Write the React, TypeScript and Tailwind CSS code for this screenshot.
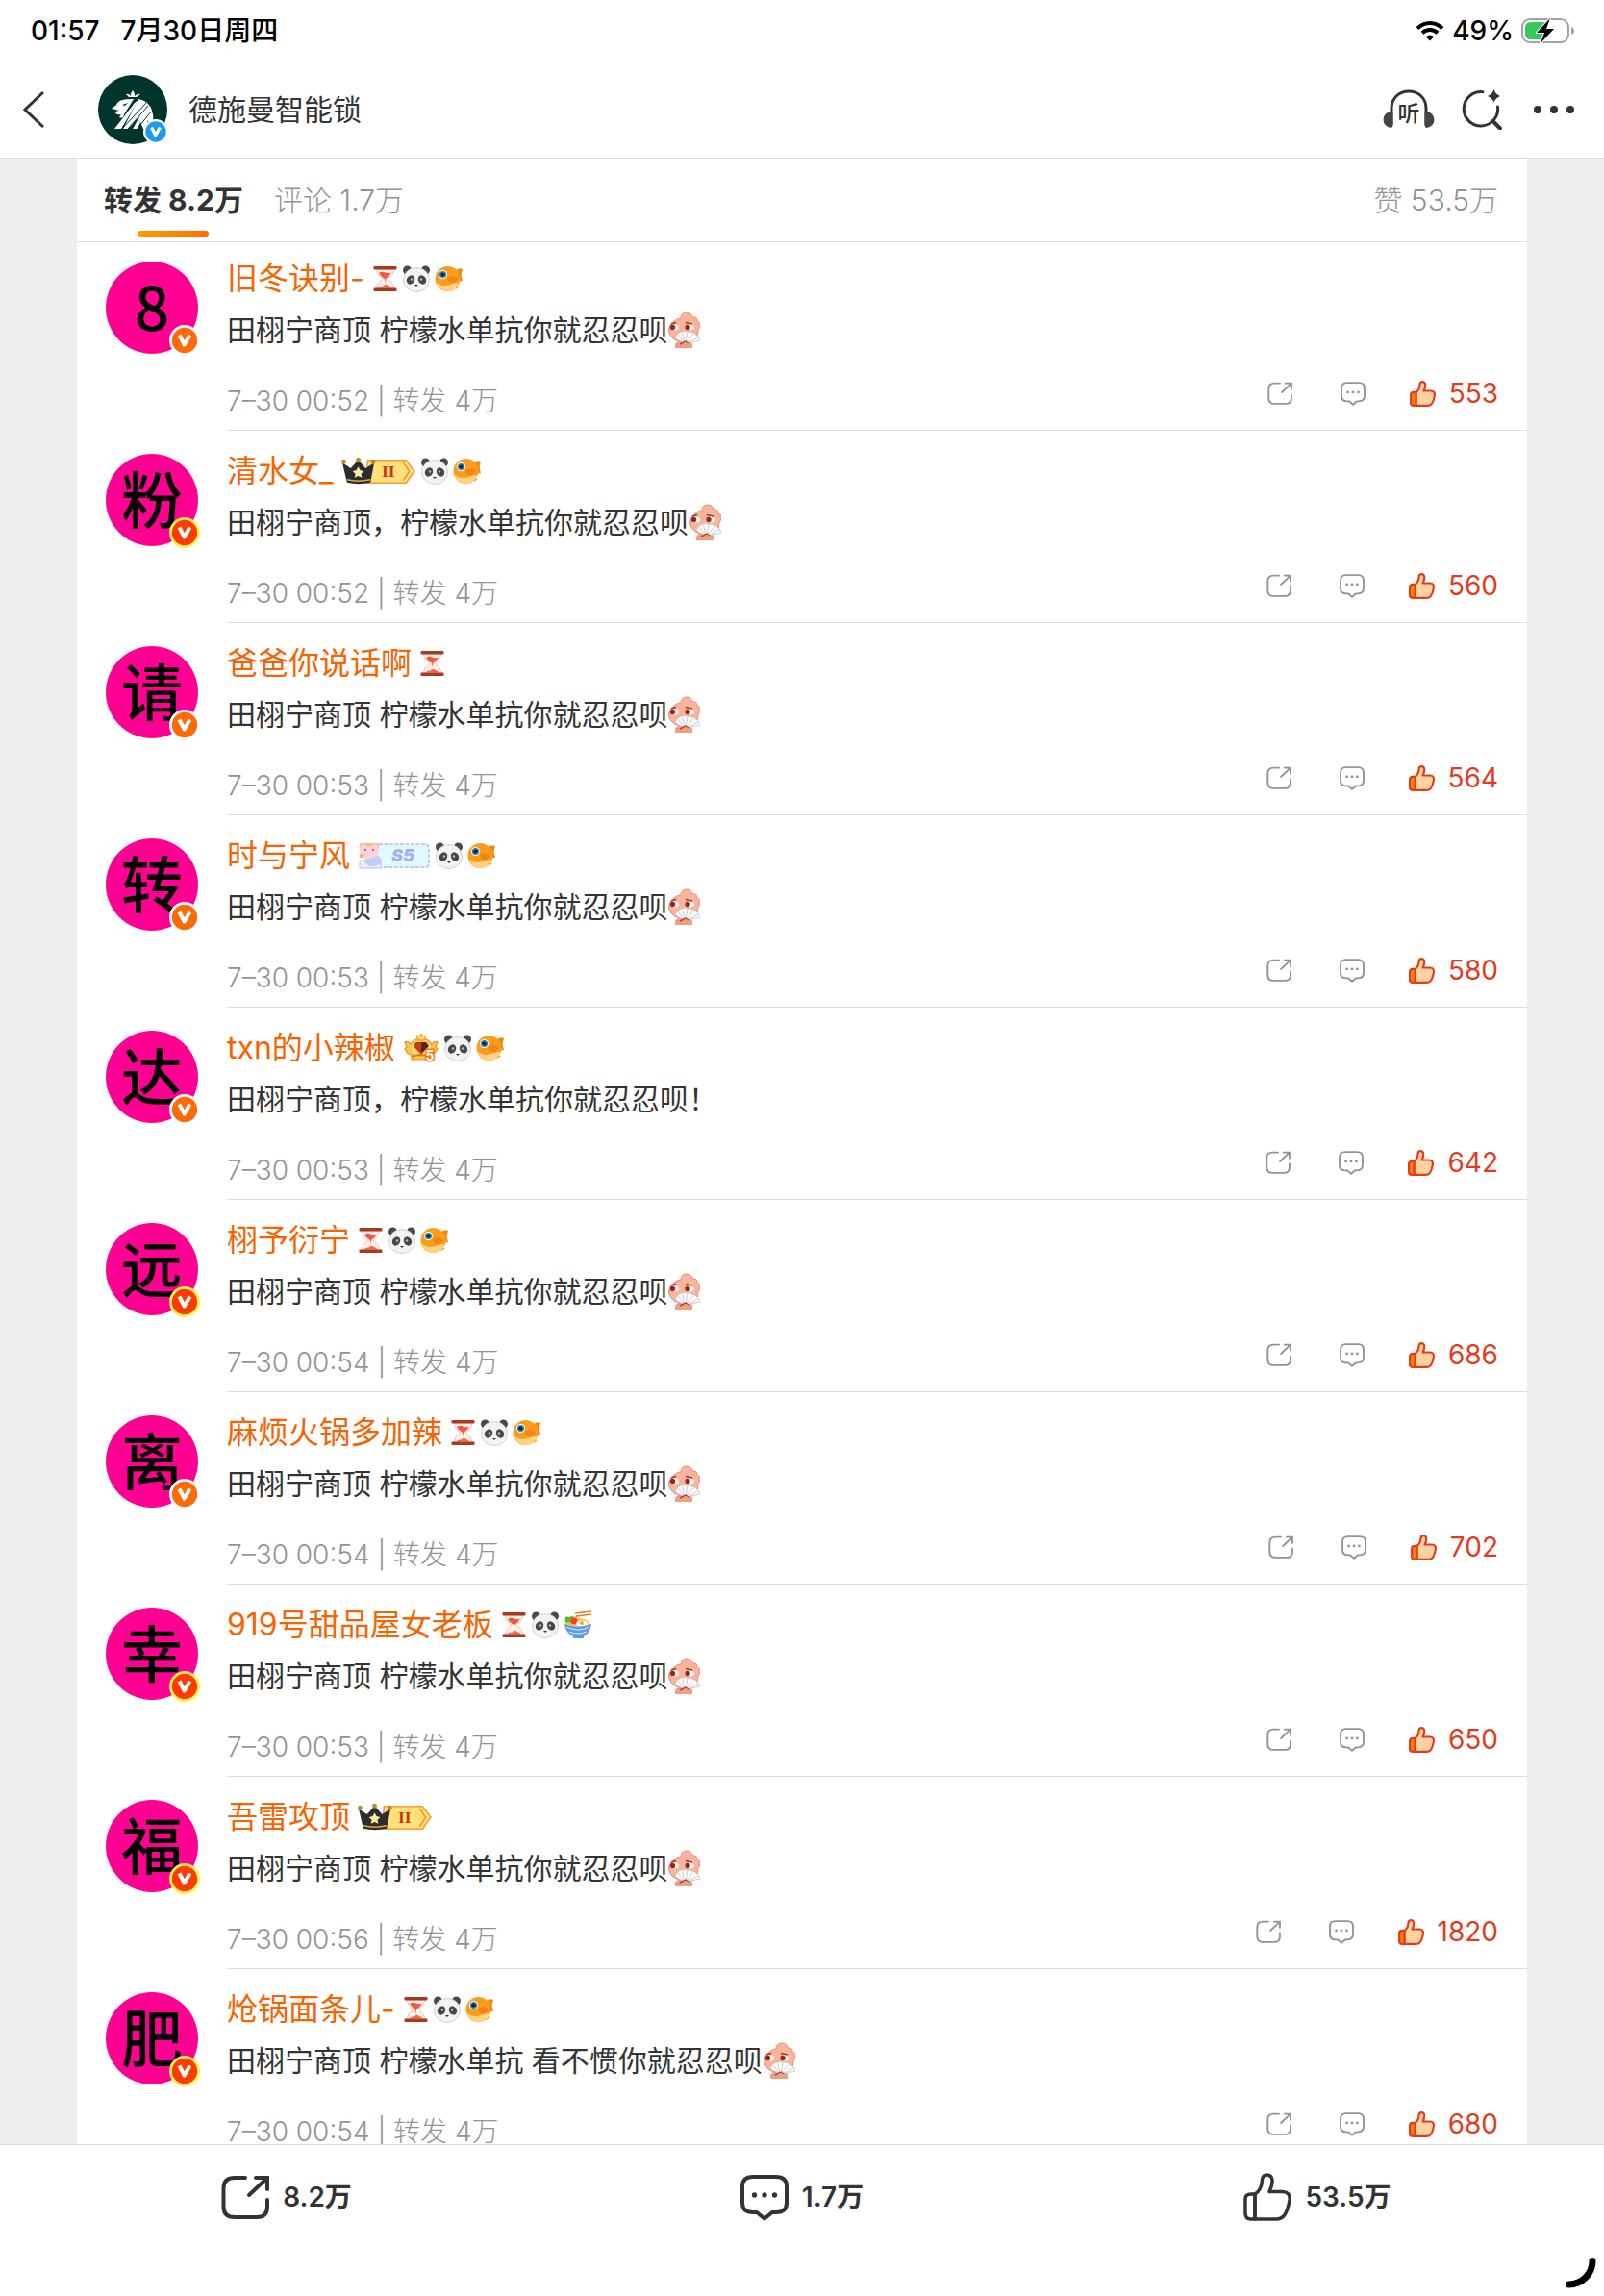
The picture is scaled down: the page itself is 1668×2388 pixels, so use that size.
import { ReactNode } from "react";

type TBadge = "hourglass" | "panda" | "fish" | "noodles" | "vip" | "s5" | "crown";

type TRepost = {
  avatar: string;
  gold?: boolean;
  name: string;
  badges: TBadge[];
  text: string;
  fan?: boolean;
  time: string;
  likes: number;
};

const TEXT = "田栩宁商顶 柠檬水单抗你就忍忍呗";

const reposts: TRepost[] = [
  { avatar: "8", name: "旧冬诀别-", badges: ["hourglass", "panda", "fish"], text: TEXT, fan: true, time: "7–30 00:52", likes: 553 },
  { avatar: "粉", gold: true, name: "清水女_", badges: ["vip", "panda", "fish"], text: "田栩宁商顶，柠檬水单抗你就忍忍呗", fan: true, time: "7–30 00:52", likes: 560 },
  { avatar: "请", name: "爸爸你说话啊", badges: ["hourglass"], text: TEXT, fan: true, time: "7–30 00:53", likes: 564 },
  { avatar: "转", name: "时与宁风", badges: ["s5", "panda", "fish"], text: TEXT, fan: true, time: "7–30 00:53", likes: 580 },
  { avatar: "达", name: "txn的小辣椒", badges: ["crown", "panda", "fish"], text: "田栩宁商顶，柠檬水单抗你就忍忍呗！", time: "7–30 00:53", likes: 642 },
  { avatar: "远", gold: true, name: "栩予衍宁", badges: ["hourglass", "panda", "fish"], text: TEXT, fan: true, time: "7–30 00:54", likes: 686 },
  { avatar: "离", name: "麻烦火锅多加辣", badges: ["hourglass", "panda", "fish"], text: TEXT, fan: true, time: "7–30 00:54", likes: 702 },
  { avatar: "幸", gold: true, name: "919号甜品屋女老板", badges: ["hourglass", "panda", "noodles"], text: TEXT, fan: true, time: "7–30 00:53", likes: 650 },
  { avatar: "福", gold: true, name: "吾雷攻顶", badges: ["vip"], text: TEXT, fan: true, time: "7–30 00:56", likes: 1820 },
  { avatar: "肥", gold: true, name: "炝锅面条儿-", badges: ["hourglass", "panda", "fish"], text: "田栩宁商顶 柠檬水单抗 看不惯你就忍忍呗", fan: true, time: "7–30 00:54", likes: 680 },
];

export default function App() {
  return (
    <div className="relative flex h-screen w-full flex-col overflow-hidden bg-white font-['Inter','Noto_Sans_CJK_SC',sans-serif] text-[#333]">
      <StatusBar />
      <Header />
      <main className="min-h-0 flex-1 overflow-hidden bg-[#ededed] px-20">
        <div className="bg-white">
          <Tabs />
          <ul>
            {reposts.map((item) => (
              <RepostRow key={item.name} item={item} />
            ))}
          </ul>
        </div>
      </main>
      <BottomBar />
      <svg className="absolute right-2 bottom-2 h-8 w-8" viewBox="0 0 32 32" fill="none">
        <path d="M28 3.500C28 17 17 28 3.500 28" stroke="#000" strokeWidth="7" strokeLinecap="round" />
      </svg>
    </div>
  );
}

function StatusBar() {
  return (
    <div className="flex h-16 items-center justify-between pr-[30px] pl-8 text-[28px] font-medium text-black">
      <div className="flex gap-[22px]">
        <span>01:57</span>
        <span>7月30日周四</span>
      </div>
      <div className="flex items-center gap-2">
        <svg className="h-[22px] w-[30px]" viewBox="0 0 30 22" fill="none" stroke="#000" strokeWidth="4">
          <path d="M2 8.500C9.500 1 20.500 1 28 8.500" />
          <path d="M7 13.300C11.700 9 18.300 9 23 13.300" />
          <path d="M10.800 17.300Q15 13.600 19.200 17.300L15 21.500Z" fill="#000" stroke="none" />
        </svg>
        <span>49%</span>
        <svg className="h-7 w-14" viewBox="0 0 56 28">
          <rect x="1" y="2" width="48" height="24" rx="8" fill="none" stroke="#a3a3a3" strokeWidth="2" />
          <path d="M10 5H24V23H10Q4 23 4 17V11Q4 5 10 5Z" fill="#34c759" />
          <path d="M52 10Q55 11 55 14T52 18Z" fill="#a3a3a3" />
          <path d="M30 1L16 16H24L20 27L34 12H26Z" fill="#000" stroke="#fff" strokeWidth="2" paintOrder="stroke" strokeLinejoin="round" />
        </svg>
      </div>
    </div>
  );
}

function Header() {
  return (
    <header className="flex h-[101px] items-center border-b border-[#dedede] pr-[30px] pl-6">
      <button aria-label="返回" className="mr-14 h-10 w-[22px]">
        <svg viewBox="0 0 22 40" fill="none" stroke="#333" strokeWidth="3">
          <path d="M21 2L2 20L21 38" />
        </svg>
      </button>
      <a href="#profile" className="flex items-center gap-[22px] text-[30px]">
        <span className="relative h-[72px] w-[72px] rounded-full bg-[#00352f]">
          <LionLogo />
          <span className="absolute -right-px bottom-0">
            <VerifiedBadge fill="#1a9af0" ring="#fff" size="h-[26px] w-[26px]" />
          </span>
        </span>
        德施曼智能锁
      </a>
      <div className="ml-auto flex items-center gap-7">
        <button aria-label="听" className="h-[42px] w-[54px]">
          <svg viewBox="0 0 54 42" fill="none" stroke="#333" strokeWidth="3">
            <path d="M9 37V20C9 -4 45 -4 45 20V37" />
            <path d="M9 23A8.500 8.500 0 0 0 9 40Q10.500 39 10.500 37V23ZM45 23A8.500 8.500 0 0 1 45 40Q43.500 39 43.500 37V23Z" fill="#444" stroke="none" />
            <text x="27" y="33" textAnchor="middle" fontSize="23" fontWeight="500" fill="#333" stroke="none">听</text>
          </svg>
        </button>
        <button aria-label="搜索" className="h-[42px] w-[42px]">
          <svg viewBox="0 0 42 42" fill="none" stroke="#333" strokeWidth="3" strokeLinecap="round">
            <path d="M22 2.700A17.700 17.700 0 1 0 37.500 18" />
            <path d="M32.500 33L40 40.500" strokeWidth="4" />
            <path d="M33.500 0Q35 5 40 7Q35 9 33.500 13.500Q32 9 27 7Q32 5 33.500 0Z" fill="#333" stroke="none" />
          </svg>
        </button>
        <button aria-label="更多" className="ml-1 h-3 w-11">
          <svg viewBox="0 0 44 12" fill="#333">
            <circle cx="5" cy="6" r="4" />
            <circle cx="22" cy="6" r="4" />
            <circle cx="39" cy="6" r="4" />
          </svg>
        </button>
      </div>
    </header>
  );
}

function Tabs() {
  return (
    <div className="flex h-[87px] items-stretch border-b border-[#dedede] pr-[30px] pl-7 text-[30px] font-light text-[#939393]">
      <button className="relative mr-8 font-bold text-[#333]">
        转发 8.2万
        <span className="absolute bottom-[5px] left-1/2 h-[6px] w-[74px] -translate-x-1/2 rounded-full bg-linear-to-r from-[#ff9d00] to-[#ff6a00]" />
      </button>
      <button>评论 1.7万</button>
      <button className="ml-auto">赞 53.5万</button>
    </div>
  );
}

function RepostRow({ item }: { item: TRepost }) {
  return (
    <li className="flex pt-6 pl-[30px] first:pt-5">
      <div className="relative mr-[30px] flex h-24 w-24 shrink-0 items-center justify-center rounded-full bg-[#ff0093] pb-2 font-['Noto_Sans_CJK_SC',sans-serif] text-[64px] leading-none font-medium text-black">
        {item.avatar}
        <span className="absolute -right-0.5 -bottom-0.5">
          {item.gold ? (
            <VerifiedBadge fill="#fc3c00" ring="#fff34d" size="h-8 w-8" />
          ) : (
            <VerifiedBadge fill="#ff6a08" ring="#fff" size="h-8 w-8" />
          )}
        </span>
      </div>
      <div className="h-44 flex-1 border-b border-[#dedede] pr-[30px]">
        <div className="flex h-9 items-center gap-1 text-[32px] text-[#f76300]">
          <a href="#user" className="mr-1 whitespace-nowrap">{item.name}</a>
          {item.badges.map((badge) => (
            <Badge key={badge} type={badge} />
          ))}
        </div>
        <p className="mt-[11px] flex h-12 items-center text-[30px]">
          {item.text}
          {item.fan && <FanFace />}
        </p>
        <div className="mt-[26px] flex h-12 items-center justify-between text-[28px]">
          <p className="font-light text-[#939393]">
            {item.time} | 转发 4万
          </p>
          <div className="flex items-center pb-4 text-[#e33b1e]">
            <button aria-label="转发" className="mr-[50px] text-[#939393]">
              <ShareIcon className="h-[26px] w-[26px]" />
            </button>
            <button aria-label="评论" className="mr-[46px] text-[#939393]">
              <CommentIcon className="h-[26px] w-[26px]" />
            </button>
            <button className="flex items-center gap-[14px]">
              <ThumbIcon className="h-[27px] w-[27px]" liked />
              {item.likes}
            </button>
          </div>
        </div>
      </div>
    </li>
  );
}

function BottomBar() {
  return (
    <footer className="flex h-[158px] shrink-0 border-t border-[#dedede] px-[30px] text-[28px] font-semibold">
      <BarButton icon={<ShareIcon className="h-[50px] w-[50px]" bold />} label="8.2万" />
      <BarButton icon={<CommentIcon className="h-[50px] w-[50px]" bold />} label="1.7万" />
      <BarButton icon={<ThumbIcon className="h-[50px] w-[50px]" />} label="53.5万" />
    </footer>
  );
}

function BarButton({ icon, label }: { icon: ReactNode; label: string }) {
  return (
    <button className="flex h-[108px] flex-1 items-center justify-center gap-[14px]">
      {icon}
      {label}
    </button>
  );
}

function ShareIcon({ className, bold }: { className: string; bold?: boolean }) {
  return (
    <svg className={className} viewBox="0 0 50 50" fill="none" stroke="currentColor" strokeWidth={bold ? 4 : 3.600} strokeLinecap="round">
      <path d="M25 5H14Q2.500 5 2.500 16V35Q2.500 46 14 46H37Q48 46 48 35V28" />
      <path d="M36 5H48V17M47 6L29 23" />
    </svg>
  );
}

function CommentIcon({ className, bold }: { className: string; bold?: boolean }) {
  return (
    <svg className={className} viewBox="0 0 50 50" fill="none" stroke="currentColor" strokeWidth={bold ? 4 : 3.600} strokeLinejoin="round">
      <path d="M13 4H37Q48 4 48 14V31Q48 41 37 41H33L25 47.500L17 41H13Q2 41 2 31V14Q2 4 13 4Z" />
      <g fill="currentColor" stroke="none">
        <circle cx="14.500" cy="23" r="2.700" />
        <circle cx="25" cy="23" r="2.700" />
        <circle cx="35.500" cy="23" r="2.700" />
      </g>
    </svg>
  );
}

function ThumbIcon({ className, liked }: { className: string; liked?: boolean }) {
  return (
    <svg className={className} viewBox="0 0 50 50" fill="none" stroke="currentColor" strokeWidth={liked ? 4 : 3.500} strokeLinejoin="round">
      <path d="M12 22Q19 18 19.500 7Q20 2 24.500 2T30 7Q30.500 13 27 19.500H41Q49 20 48 28Q46.500 38 43 43.500Q40 48 34 48H12Z" fill={liked ? "#ffd2a1" : "none"} />
      <path d="M12 22H8Q2 22 2 27V42Q2 48 8 48H12Z" fill={liked ? "#ff8200" : "none"} />
    </svg>
  );
}

function VerifiedBadge({ fill, ring, size }: { fill: string; ring: string; size: string }) {
  return (
    <svg className={size} viewBox="0 0 32 32">
      <circle cx="16" cy="16" r="16" fill={ring} />
      <circle cx="16" cy="16" r="13.200" fill={fill} />
      <path d="M10.500 10.500L15.700 20.500L21.500 10.500" fill="none" stroke="#fff" strokeWidth="4" strokeLinejoin="round" />
    </svg>
  );
}

function LionLogo() {
  return (
    <svg className="h-[72px] w-[72px]" viewBox="0 0 72 72" fill="#fff">
      <path d="M29 20Q32 19 34 22Q34 18 36 16Q38 18 38 22Q41 19 44 20L40 23H32Z" />
      <path d="M42 25Q53 27 56 37Q59 46 55 55L51 47V56H47L44 49L41 56H36L44 42L31 56H26Z" />
      <path d="M38 29L42 26L24 56H17Z" />
      <path d="M37 25L27 41Q26 46 22 44L24 41Q18 42 18 38L22 37L14 35L19 31Q21 24 37 25Z" />
      <path d="M25 31L31 29L28 32Z" fill="#00352f" />
      <path d="M52 32L31 56M50 29L24 57M55 38L40 57" stroke="#00352f" strokeWidth="1" />
    </svg>
  );
}

// small pictures shown after the user name
function Badge({ type }: { type: TBadge }) {
  switch (type) {
    case "hourglass":
      return (
        <svg className="h-[30px] w-[27px]" viewBox="2 0 26 30">
          <path d="M5.500 5H24.500Q24 11 17.500 15Q24 19 24.500 25H5.500Q6 19 12.500 15Q6 11 5.500 5Z" fill="#fdf0ec" stroke="#e8b5a8" strokeWidth="0.800" />
          <path d="M8.500 9Q12 7 15 8.500T21.500 8.500Q20 12 15.500 15L15 20L14.500 15Q10 12 8.500 9Z" fill="#f4583a" />
          <path d="M8 24.500Q10 22 13 22.500Q16 19.500 18 22Q21 22 22 24.500Z" fill="#f4684a" />
          <rect x="3" y="2" width="24" height="3.500" rx="1" fill="#a93a1f" />
          <rect x="3" y="24.500" width="24" height="3.500" rx="1" fill="#a93a1f" />
        </svg>
      );
    case "panda":
      return (
        <svg className="h-[30px] w-[30px]" viewBox="0 0 30 30">
          <circle cx="5.500" cy="6" r="4.500" fill="#474b4e" />
          <circle cx="24.500" cy="6" r="4.500" fill="#474b4e" />
          <ellipse cx="15" cy="16" rx="13.500" ry="12.500" fill="#f3f3f3" stroke="#d2d2d2" />
          <ellipse cx="9" cy="16" rx="4" ry="4.800" fill="#44484b" transform="rotate(30 9 16)" />
          <ellipse cx="21" cy="16" rx="4" ry="4.800" fill="#44484b" transform="rotate(-30 21 16)" />
          <circle cx="10" cy="15.500" r="1.200" fill="#bbb" />
          <circle cx="20" cy="15.500" r="1.200" fill="#bbb" />
          <path d="M13 21H17L15 23Z" fill="#333" />
        </svg>
      );
    case "fish":
      return (
        <svg className="h-[30px] w-[30px]" viewBox="0 0 30 30">
          <path d="M21 7Q25 3 29 5L27.500 11L29 17Q25 18 22 14Z" fill="#f28a12" />
          <path d="M21 22L26 23L22 26Z" fill="#f7a02a" />
          <circle cx="13.500" cy="15" r="13" fill="#fb9c1c" />
          <path d="M1 18Q8 24 16 21Q22 19 26 19Q22 28 14 28Q4 27 1 18Z" fill="#ffd384" />
          <path d="M13 14Q20 10 24 15Q20 21 14 18Z" fill="#f08414" />
          <circle cx="8.500" cy="10.500" r="4.500" fill="#fff" />
          <circle cx="8.500" cy="10.500" r="3.600" fill="#1588c7" />
          <circle cx="8.500" cy="10.500" r="2.100" fill="#10222f" />
        </svg>
      );
    case "noodles":
      return (
        <svg className="h-[30px] w-[30px]" viewBox="0 0 30 30">
          <path d="M2 12Q2 5 8 8Q12 3 17 8Q27 9 28 16H2Z" fill="#ffc44d" />
          <path d="M2 12Q0 5 6 7Q10 4 11 9Q8 14 2 12Z" fill="#68b32e" />
          <circle cx="11" cy="11" r="3.500" fill="#ee4035" />
          <ellipse cx="19" cy="13.500" rx="6" ry="3" fill="#fff" />
          <circle cx="19" cy="13" r="2" fill="#ffa800" />
          <path d="M12 3L29 1M13 6L29 4" stroke="#d98324" strokeWidth="1.500" />
          <path d="M1 14Q15 19 29 14Q28 23 21 27V29H10V27Q2 23 1 14Z" fill="#5e9be0" />
          <path d="M3 17Q15 23 27 17M6 22Q15 26 24 22" fill="none" stroke="#e4f0ff" />
        </svg>
      );
    case "vip":
      return (
        <svg className="h-[30px] w-[78px]" viewBox="0 0 80 30">
          <path d="M28 3.500H69L78 15L69 27.500H26Z" fill="#ffe07a" stroke="#f59b33" strokeWidth="1.500" />
          <path d="M66 6L72.500 15L66 25" fill="none" stroke="#f0952a" strokeWidth="1.500" />
          <path d="M1 6L10 12L18 3L26 12L35 6L31 27Q18 30 6 27Z" fill="#2d2c33" />
          <path d="M6 24Q18 27 31 24" fill="none" stroke="#e3a936" strokeWidth="1.500" />
          <circle cx="2.500" cy="5" r="2.500" fill="#b78d2a" />
          <circle cx="18" cy="3" r="2.500" fill="#b78d2a" />
          <circle cx="34" cy="5" r="2.500" fill="#b78d2a" />
          <path d="M18 10L20 14L24 15L21 18L22 22L18 20L14 22L15 18L12 15L16 14Z" fill="#ffe9a0" />
          <text x="50" y="21" textAnchor="middle" fontFamily="Liberation Serif" fontSize="18" fontWeight="700" fill="#c8360d">II</text>
        </svg>
      );
    case "s5":
      return (
        <svg className="h-[30px] w-[76px]" viewBox="0 0 76 30">
          <rect x="18" y="3" width="56" height="24" rx="4" fill="#e0faff" stroke="#b4b9f7" strokeWidth="1.500" strokeDasharray="4 1.500" />
          <rect x="2" y="20" width="22" height="8" fill="#e6ecff" stroke="#b7bff5" />
          <ellipse cx="16" cy="20" rx="9" ry="6" fill="#c3cbfa" />
          <circle cx="5" cy="5" r="3.500" fill="#f8bcc5" />
          <circle cx="19" cy="5" r="3.500" fill="#f8bcc5" />
          <ellipse cx="12" cy="10" rx="10" ry="8" fill="#fbd3d8" />
          <circle cx="8" cy="9" r="1" fill="#8a5560" />
          <circle cx="16" cy="9" r="1" fill="#8a5560" />
          <path d="M7 2H17L15 5H9Z" fill="#f5bd6e" />
          <circle cx="4" cy="15" r="2.500" fill="#f7b36b" />
          <text x="47" y="21" textAnchor="middle" fontSize="18" fontWeight="900" fontStyle="italic" fill="#a8aef4">S5</text>
        </svg>
      );
    case "crown":
      return (
        <svg className="h-[30px] w-[38px]" viewBox="0 0 38 30">
          <path d="M2 9Q5 7 8 11Q12 5 19 5T30 11Q33 7 36 9L34 14L36 16Q33 22 29 22V27H9V22Q5 22 2 16L4 14Z" fill="#ffc64d" stroke="#f08a1c" strokeWidth="1.200" />
          <path d="M11 12Q9 18 15 21M27 12Q29 18 23 21" fill="none" stroke="#fff0b5" strokeWidth="2" />
          <path d="M9 24Q19 20 29 24" fill="none" stroke="#e9780c" strokeWidth="2" />
          <path d="M14 9H24L27 13L19 21L11 13Z" fill="#57231e" />
          <path d="M14 9H19V21L11 13Z" fill="#c83920" />
          <path d="M14 2L17 3L19 0L21 3L24 2L22 7H16Z" fill="#ffd869" stroke="#f08a1c" />
          <text x="28" y="28" textAnchor="middle" fontSize="14" fontWeight="700" fill="#fff" stroke="#f47a0e" strokeWidth="3" paintOrder="stroke">5</text>
        </svg>
      );
  }
}

function FanFace() {
  return (
    <svg className="h-[38px] w-9" viewBox="0 0 36 38">
      <path d="M7 10Q10 7 14 7Q14 1 20 1Q25 1 26 6Q31 5 31 10Q35 11 33 14Q35 17 32 19Q33 31 18 32Q4 31 1.500 21Q1 14 7 10Z" fill="#fbb49c" stroke="#e88f7c" />
      <path d="M4 13L9 11.500M19 11.500L26 13" stroke="#873e2f" strokeWidth="1.500" />
      <ellipse cx="7.500" cy="16.500" rx="4.500" ry="3" fill="#fff" />
      <ellipse cx="23" cy="16.500" rx="5" ry="3" fill="#fff" />
      <circle cx="5.500" cy="16.500" r="2.700" fill="#9d2517" />
      <circle cx="21" cy="16.500" r="2.700" fill="#9d2517" />
      <path d="M8 38Q7 32 12 31H23Q27 32 26 38Z" fill="#f29c80" />
      <path d="M18 33L8 28Q10 20 19 20.500Q31 21 34 30L20 33Z" fill="#fff" stroke="#bdbdbd" strokeWidth="0.800" />
      <path d="M18 33L11 24M18 33L15.500 21.500M19 33L21 21M19 33L27 23.500M20 33L32 27" stroke="#bdbdbd" strokeWidth="0.800" />
      <path d="M13 34L19 31L22 33" fill="none" stroke="#a54c34" strokeWidth="1.500" />
    </svg>
  );
}
